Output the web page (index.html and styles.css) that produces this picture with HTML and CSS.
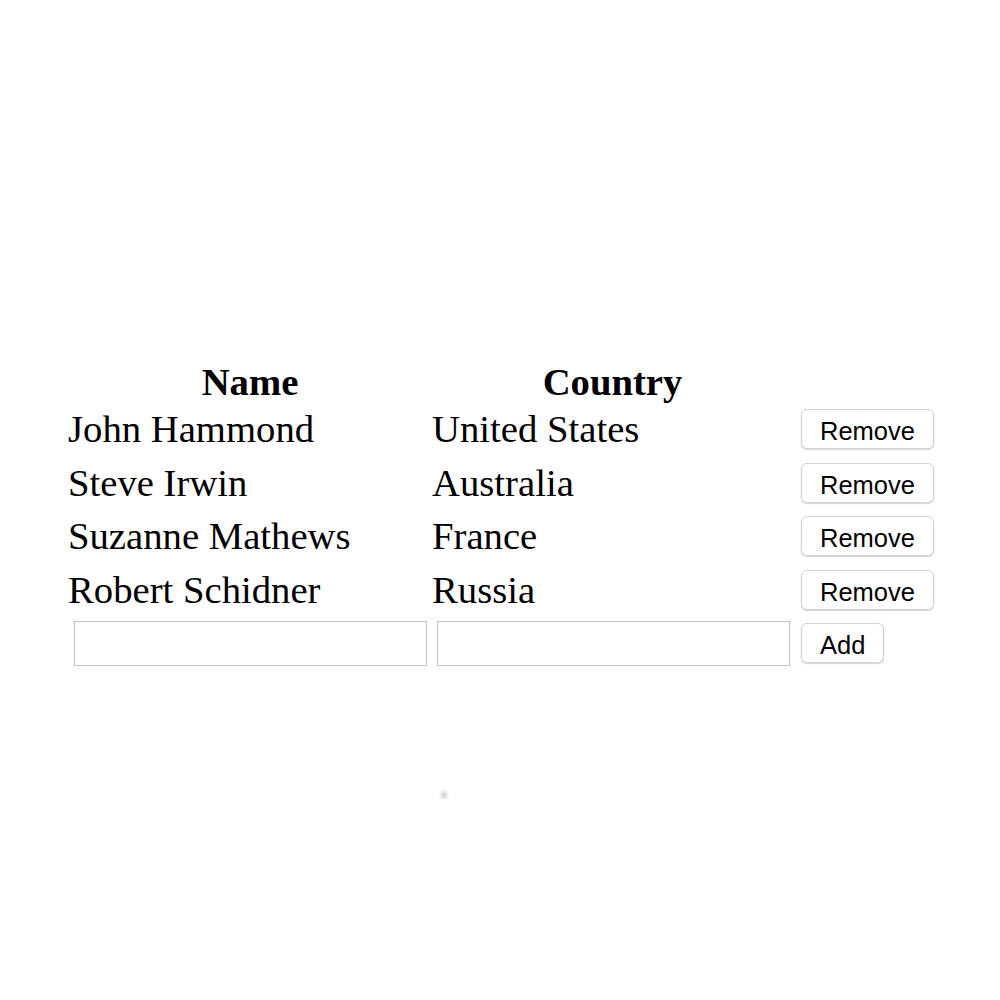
FILE: index.html
```html
<!DOCTYPE html>
<html>
<head>
<meta charset="utf-8">
<title>People</title>
<link rel="stylesheet" href="styles.css">
</head>
<body>
<div class="table">
  <div class="th">Name</div>
  <div class="th">Country</div>
  <div class="th"></div>

  <div class="td">John Hammond</div>
  <div class="td">United States</div>
  <div class="td"><button class="btn">Remove</button></div>

  <div class="td">Steve Irwin</div>
  <div class="td">Australia</div>
  <div class="td"><button class="btn">Remove</button></div>

  <div class="td">Suzanne Mathews</div>
  <div class="td">France</div>
  <div class="td"><button class="btn">Remove</button></div>

  <div class="td">Robert Schidner</div>
  <div class="td">Russia</div>
  <div class="td"><button class="btn">Remove</button></div>

  <div class="td"><input class="field field-name" type="text"></div>
  <div class="td"><input class="field field-country" type="text"></div>
  <div class="td"><button class="btn">Add</button></div>
</div>
<div class="dot"></div>
</body>
</html>
```
FILE: styles.css
```css
html, body {
  margin: 0;
  padding: 0;
  background: #ffffff;
}
body {
  position: relative;
  width: 1000px;
  height: 1000px;
  overflow: hidden;
  font-family: "Liberation Serif", "Times New Roman", serif;
  color: #000;
}
.table {
  display: grid;
  grid-template-columns: 364px 361px 144px;
  grid-template-rows: 40.5px repeat(5, 53.5px);
  align-items: center;
  margin: 362px 0 0 68px;
}
.th {
  font-weight: bold;
  font-size: 38.7px;
  line-height: 44px;
  text-align: center;
}
.td {
  font-size: 38.7px;
  line-height: 44px;
  display: flex;
  align-items: center;
}
.btn {
  box-sizing: border-box;
  height: 40px;
  margin-left: 8px;
  padding: 5px 18px 0;
  font-family: "Liberation Sans", Arial, sans-serif;
  font-size: 25.5px;
  color: #000;
  background: #fff;
  border: 1px solid #d2d2d2;
  border-radius: 6px;
  box-shadow: 0 1px 1.5px rgba(0, 0, 0, 0.18);
}
.field {
  box-sizing: border-box;
  width: 353px;
  height: 45px;
  margin: 0;
  border: 1px solid #c3c3c3;
  background: #fff;
  padding: 0 4px;
  font-size: 20px;
}
.field-name {
  margin-left: 6px;
}
.field-country {
  margin-left: 5px;
}
.dot {
  position: absolute;
  left: 439px;
  top: 790px;
  width: 10px;
  height: 10px;
  border-radius: 50%;
  background: radial-gradient(circle, rgba(200,200,200,0.9) 0%, rgba(220,220,220,0.5) 50%, rgba(255,255,255,0) 100%);
}
```
